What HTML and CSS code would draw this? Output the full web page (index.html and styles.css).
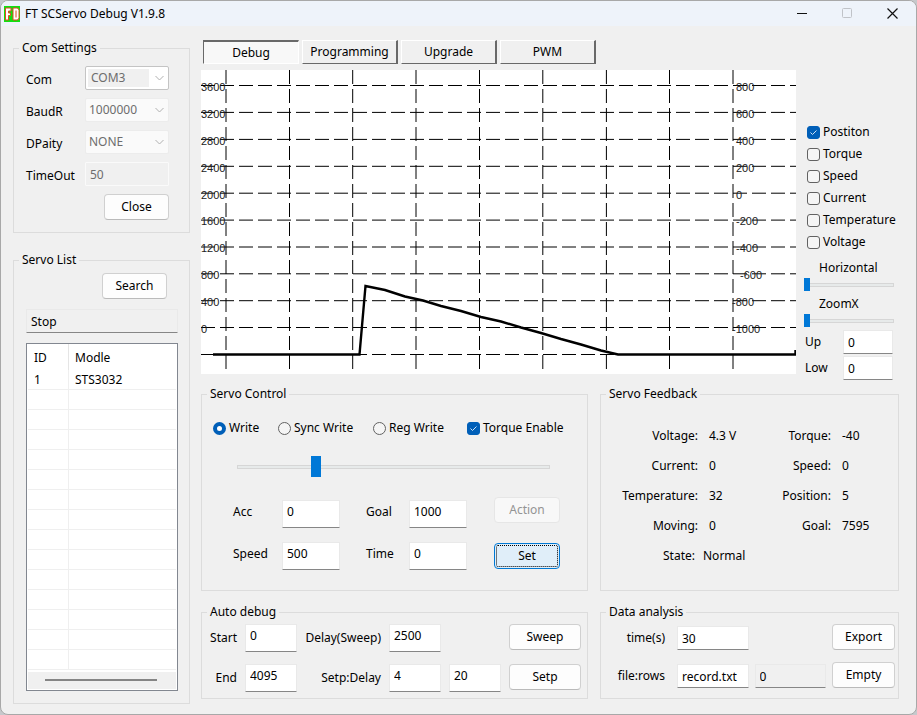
FILE: index.html
```html
<!DOCTYPE html>
<html lang="en">
<head>
  <meta charset="UTF-8">
  <meta name="viewport" content="width=device-width, initial-scale=1.0">
  <title>FT SCServo Debug V1.9.8</title>
  <link rel="stylesheet" href="styles.css">
</head>
<body>

<div class="window">
  <!-- Title bar -->
  <header class="titlebar">
    <svg class="logo" width="16" height="16" viewBox="0 0 16 16" aria-hidden="true">
      <rect width="16" height="16" fill="#10e010"/>
      <path d="M1.500 2h5.500v3H4.500v2H6.500v2.500H4.500V14H1.500z" fill="#fff" stroke="#e04a20"/>
      <path d="M9 2h4q2 0 2 2.500v7q0 2.500-2 2.500H9z" fill="#fff" stroke="#e04a20"/>
      <path d="M12 4.500v7" stroke="#e04a20"/>
    </svg>
    <h1>FT SCServo Debug V1.9.8</h1>
    <button class="win-btn" type="button" aria-label="Minimize">
      <svg width="11" height="11" viewBox="0 0 11 11"><path d="M0 5.500h10" stroke="#111"/></svg>
    </button>
    <button class="win-btn" type="button" aria-label="Maximize" disabled>
      <svg width="11" height="11" viewBox="0 0 11 11"><rect x=".5" y=".5" width="9" height="9" rx="1" fill="none" stroke="#c0c3c8"/></svg>
    </button>
    <button class="win-btn" type="button" aria-label="Close window">
      <svg width="11" height="11" viewBox="0 0 11 11"><path d="M.5.5l10 10M10.500.5l-10 10" stroke="#111" stroke-width="1.200"/></svg>
    </button>
  </header>

  <div class="content">
    <!-- Left column -->
    <aside class="left">
      <fieldset class="com">
        <legend>Com Settings</legend>
        <div class="com-row">
          <label for="com">Com</label>
          <select id="com" class="open" disabled><option>COM3</option></select>
        </div>
        <div class="com-row">
          <label for="baud">BaudR</label>
          <select id="baud" disabled><option>1000000</option></select>
        </div>
        <div class="com-row">
          <label for="parity">DPaity</label>
          <select id="parity" disabled><option>NONE</option></select>
        </div>
        <div class="com-row">
          <label for="timeout">TimeOut</label>
          <input type="text" id="timeout" value="50" disabled>
        </div>
        <button class="btn" type="button">Close</button>
      </fieldset>

      <fieldset class="servos">
        <legend>Servo List</legend>
        <button class="btn" type="button">Search</button>
        <input type="text" class="status" value="Stop" aria-label="Search status" readonly>
        <div class="list">
          <table>
            <thead>
              <tr><th class="id">ID</th><th>Modle</th></tr>
            </thead>
            <tbody>
              <tr><td>1</td><td>STS3032</td></tr>
              <tr><td></td><td></td></tr>
              <tr><td></td><td></td></tr>
              <tr><td></td><td></td></tr>
              <tr><td></td><td></td></tr>
              <tr><td></td><td></td></tr>
              <tr><td></td><td></td></tr>
              <tr><td></td><td></td></tr>
              <tr><td></td><td></td></tr>
              <tr><td></td><td></td></tr>
              <tr><td></td><td></td></tr>
              <tr><td></td><td></td></tr>
              <tr><td></td><td></td></tr>
              <tr><td></td><td></td></tr>
              <tr><td></td><td></td></tr>
            </tbody>
          </table>
          <div class="scrollbar"><div class="thumb"></div></div>
        </div>
      </fieldset>
    </aside>

    <!-- Right column -->
    <main class="right">
      <nav class="tabs">
        <button class="tab active" type="button">Debug</button>
        <button class="tab" type="button">Programming</button>
        <button class="tab" type="button">Upgrade</button>
        <button class="tab" type="button">PWM</button>
      </nav>

      <div class="scope">
        <svg class="chart" viewBox="0 0 595 304" role="img" aria-label="Servo position chart">
          <rect width="595" height="304" fill="#fff"/>
          <g class="grid-lines">
            <path d="M25 0V300M88.500 0V300M151.700 0V300M215 0V300M278.500 0V300M341.800 0V300M405.400 0V300M468.500 0V300M532 0V300"/>
            <path d="M0 15.500H595M0 42.400H595M0 69.400H595M0 96.300H595M0 123.200H595M0 150.100H595M0 177H595M0 203.800H595M0 230.700H595M0 257.500H595M0 284.500H595"/>
          </g>
          <g class="scale">
            <text x="0" y="21">3600</text>
            <text x="0" y="48">3200</text>
            <text x="0" y="75">2800</text>
            <text x="0" y="102">2400</text>
            <text x="0" y="129">2000</text>
            <text x="0" y="155">1600</text>
            <text x="0" y="182">1200</text>
            <text x="0" y="209">800</text>
            <text x="0" y="236">400</text>
            <text x="0" y="263">0</text>
            <text x="535" y="21">800</text>
            <text x="535" y="48">600</text>
            <text x="535" y="75">400</text>
            <text x="535" y="102">200</text>
            <text x="535" y="129">0</text>
            <text x="535" y="155">-200</text>
            <text x="535" y="182">-400</text>
            <text x="539" y="209">-600</text>
            <text x="531" y="236">-800</text>
            <text x="531" y="263">-1000</text>
          </g>
          <path class="trace" d="M12 284.500H158.500L164.500 216L184 220L204 226.500L222 230.500L240 236L260 241L280 247L300 251.500L320 257.500L340 263L360 269L380 274.500L400 280.500L417 284.500H594.500V280"/>
        </svg>

        <div class="side">
          <label class="check"><input type="checkbox" checked>Postiton</label>
          <label class="check"><input type="checkbox">Torque</label>
          <label class="check"><input type="checkbox">Speed</label>
          <label class="check"><input type="checkbox">Current</label>
          <label class="check"><input type="checkbox">Temperature</label>
          <label class="check"><input type="checkbox">Voltage</label>
          <div class="zoom">
            <label for="horizontal">Horizontal</label>
            <input type="range" id="horizontal" value="0">
            <label for="zoomx">ZoomX</label>
            <input type="range" id="zoomx" value="0">
          </div>
          <div class="limits">
            <label for="up">Up</label>
            <input type="text" id="up" value="0">
            <label for="low">Low</label>
            <input type="text" id="low" value="0">
          </div>
        </div>
      </div>

      <div class="panels">
        <fieldset class="control">
          <legend>Servo Control</legend>
          <div class="modes">
            <label class="check"><input type="radio" name="mode" checked>Write</label>
            <label class="check"><input type="radio" name="mode">Sync Write</label>
            <label class="check"><input type="radio" name="mode">Reg Write</label>
            <label class="check"><input type="checkbox" checked>Torque Enable</label>
          </div>
          <input type="range" class="big" min="0" max="4095" value="988" aria-label="Goal position">
          <div class="params">
            <div class="fields">
              <label for="acc">Acc</label>
              <input type="text" class="tall" id="acc" value="0">
              <label for="goal">Goal</label>
              <input type="text" class="tall" id="goal" value="1000">
              <label for="speed">Speed</label>
              <input type="text" class="tall" id="speed" value="500">
              <label for="time">Time</label>
              <input type="text" class="tall" id="time" value="0">
            </div>
            <div class="actions">
              <button class="btn" type="button" disabled>Action</button>
              <button class="btn primary" type="button">Set</button>
            </div>
          </div>
        </fieldset>

        <fieldset class="feedback">
          <legend>Servo Feedback</legend>
          <dl>
            <dt>Voltage:</dt><dd>4.3 V</dd><dt>Torque:</dt><dd>-40</dd>
            <dt>Current:</dt><dd>0</dd><dt>Speed:</dt><dd>0</dd>
            <dt>Temperature:</dt><dd>32</dd><dt>Position:</dt><dd>5</dd>
            <dt>Moving:</dt><dd>0</dd><dt>Goal:</dt><dd>7595</dd>
          </dl>
          <dl class="state">
            <dt>State:</dt><dd>Normal</dd>
          </dl>
        </fieldset>

        <fieldset class="auto">
          <legend>Auto debug</legend>
          <div class="auto-grid">
            <label for="start">Start</label>
            <input type="text" class="tall" id="start" value="0">
            <label for="sweep-delay">Delay(Sweep)</label>
            <input type="text" class="tall" id="sweep-delay" value="2500">
            <button class="btn" type="button">Sweep</button>
            <label for="end">End</label>
            <input type="text" class="tall" id="end" value="4095">
            <label for="step">Setp:Delay</label>
            <input type="text" class="tall" id="step" value="4">
            <input type="text" class="tall" value="20" aria-label="Step delay">
            <button class="btn" type="button">Setp</button>
          </div>
        </fieldset>

        <fieldset class="data">
          <legend>Data analysis</legend>
          <div class="data-grid">
            <label for="seconds">time(s)</label>
            <input type="text" id="seconds" value="30">
            <button class="btn" type="button">Export</button>
            <label for="file">file:rows</label>
            <input type="text" id="file" value="record.txt">
            <input type="text" value="0" aria-label="Rows" readonly>
            <button class="btn" type="button">Empty</button>
          </div>
        </fieldset>
      </div>
    </main>
  </div>
</div>

</body>
</html>
```
FILE: styles.css
```css
* { box-sizing: border-box; }
body {
  margin: 0;
  background: #c6c9cc;
  color: #000;
  font-family: "Noto Sans", "Open Sans", sans-serif;
  font-size: 12px;
  line-height: 16px;
}
input, select, button {
  font: inherit;
  color: inherit;
  margin: 0;
}
.window {
  min-height: 100vh;
  background: #f0f0f0;
  border: 1px solid #a8a8a8;
  border-radius: 8px;
  overflow: hidden;
}

/* Title bar */
.titlebar {
  display: flex;
  align-items: center;
  height: 25px;
  padding: 0 1px 0 3px;
  background: #eef3fa;
}
.titlebar h1 {
  flex: 1;
  margin: 0 0 0 5px;
  font-size: 12px;
  font-weight: 400;
}
.win-btn {
  display: flex;
  align-items: center;
  justify-content: center;
  width: 45px;
  height: 24px;
  padding: 0;
  border: 0;
  background: none;
}

.content {
  display: grid;
  grid-template-columns: 177px 1fr;
  gap: 11px;
  padding: 14px 17px 10px 12px;
}

/* --inset is the left padding of the group, the legend ignores it */
fieldset {
  --inset: 0px;
  min-width: 0;
  margin: 0;
  padding: 0;
  border: 1px solid #dcdcdc;
}
legend {
  margin-left: calc(5px - var(--inset));
  padding: 0 3px;
}

/* Controls */
input[type="text"] {
  width: 100%;
  min-width: 0;
  height: 24px;
  padding: 0 4px;
  border: 1px solid #e9e9e9;
  border-bottom-color: #868686;
  border-radius: 1px;
  background: #fff;
  outline: none;
}
input[type="text"].tall {
  height: 28px;
  padding-bottom: 5px;
}
input[type="text"]:disabled {
  border-color: #fafafa;
  background: #f0f0f0;
  color: #6d6d6d;
}
input[type="text"]:read-only:not(:disabled) {
  background: #f0f0f0;
}
select {
  width: 100%;
  height: 24px;
  padding: 0 3px;
  appearance: none;
  border: 1px solid #ececec;
  border-radius: 2px;
  background: #fafafa url("data:image/svg+xml,%3Csvg xmlns='http://www.w3.org/2000/svg' width='9' height='6'%3E%3Cpath d='M.5 1l4 4 4-4' fill='none' stroke='%23b0b0b0'/%3E%3C/svg%3E") no-repeat right 4px center;
}
select:disabled {
  color: #6d6d6d;
  opacity: 1;
}
select.open {
  padding: 0 5px;
  border-color: #c4c4c4;
  background-color: #fff;
  background-image: url("data:image/svg+xml,%3Csvg xmlns='http://www.w3.org/2000/svg' width='9' height='6'%3E%3Cpath d='M.5 1l4 4 4-4' fill='none' stroke='%23b0b0b0'/%3E%3C/svg%3E"), linear-gradient(#f0f0f0, #f0f0f0);
  background-size: auto, 61px 18px;
  background-position: right 4px center, 2px 2px;
}
.btn {
  height: 26px;
  padding: 0;
  border: 1px solid #d0d0d0;
  border-bottom-color: #bababa;
  border-radius: 4px;
  background: #fdfdfd;
}
.btn:disabled {
  border-color: #e6e6e6;
  background: #f8f8f8;
  color: #949494;
}
.btn.primary {
  border-color: #0078d4;
  background: #e0eef9;
  outline: 1px dotted #000;
  outline-offset: -3px;
}
.check {
  display: flex;
  align-items: center;
  gap: 3px;
  height: 22px;
  white-space: nowrap;
}
input[type="checkbox"],
input[type="radio"] {
  flex: none;
  width: 13px;
  height: 13px;
  appearance: none;
  border: 1px solid #626262;
  border-radius: 3px;
  background: #f5f5f5;
}
input[type="radio"] { border-radius: 50%; }
input[type="checkbox"]:checked {
  border-color: #005fb8;
  background: #005fb8 url("data:image/svg+xml,%3Csvg xmlns='http://www.w3.org/2000/svg' width='11' height='11'%3E%3Cpath d='M2.500 5.500l2 2 4-4' fill='none' stroke='%23cfe2f4'/%3E%3C/svg%3E") center no-repeat;
}
input[type="radio"]:checked {
  border: 4px solid #005fb8;
  background: #fff;
}
input[type="range"] {
  display: block;
  width: 100%;
  height: 18px;
  appearance: none;
  background: none;
}
input[type="range"]::-webkit-slider-runnable-track {
  height: 4px;
  border: 1px solid #d6d6d6;
  background: #e7eaea;
}
input[type="range"]::-webkit-slider-thumb {
  appearance: none;
  width: 6px;
  height: 13px;
  margin: -6px -1px 0;
  background: #0078d7;
}
input[type="range"].big::-webkit-slider-thumb {
  width: 10px;
  height: 21px;
  margin: -10px 0 0;
}

/* Left column */
.left {
  display: flex;
  flex-direction: column;
  gap: 19px;
}
.com {
  --inset: 12px;
  display: flex;
  flex-direction: column;
  gap: 8px;
  padding: 10px 20px 12px var(--inset);
}
.com-row {
  display: grid;
  grid-template-columns: 59px 1fr;
  align-items: end;
}
.com-row label { line-height: 20px; }
.com .btn, .servos .btn {
  align-self: flex-end;
  width: 65px;
}
.servos {
  --inset: 12px;
  display: flex;
  flex-direction: column;
  gap: 10px;
  padding: 5px 11px 12px var(--inset);
}
.servos .btn { margin-right: 11px; }
.list {
  border: 1px solid #828790;
  background: #fff;
  padding: 0 1px 1px;
}
.list table {
  width: 100%;
  border-collapse: separate;
  border-spacing: 0;
}
.list th {
  height: 26px;
  padding: 2px 6px 0;
  border-right: 1px solid #e5e5e5;
  font-weight: 400;
  text-align: left;
}
.list th:last-child { border-right: 0; }
.list .id { width: 41px; }
.list td {
  height: 20px;
  padding: 0 6px;
  border-right: 1px solid #efefef;
  border-bottom: 1px solid #efefef;
}
.list td:last-child { border-right: 0; }
.scrollbar {
  margin-top: 2px;
  padding: 7px 19px 8px 17px;
  background: #f0f0f0;
}
.thumb {
  height: 2px;
  background: #858585;
}

/* Tabs and chart */
.tabs {
  display: flex;
  gap: 3px;
  padding-left: 2px;
}
.tab {
  width: 96px;
  height: 24px;
  padding: 0;
  border: 1px solid #fff;
  border-right: 2px solid #696969;
  border-bottom-color: #696969;
  background: #f0f0f0;
}
.tab.active {
  border: 1px solid #fff;
  border-top: 2px solid #696969;
  border-left: 1px solid #696969;
  background: #f8f8f8;
}
.scope {
  display: flex;
  align-items: flex-start;
  gap: 8px;
  padding: 6px 0;
}
.chart {
  flex: 1;
  min-width: 0;
}
.grid-lines path {
  fill: none;
  stroke: #000;
  stroke-dasharray: 14 5;
}
.scale {
  font-family: "Liberation Sans", Arial, sans-serif;
  font-size: 11px;
  fill: #222;
}
.trace {
  fill: none;
  stroke: #000;
  stroke-width: 2.4;
}
.side {
  width: 95px;
  padding-top: 51px;
}
.side .check { padding-left: 3px; }
.zoom {
  padding: 7px 5px 0 0;
}
.zoom label {
  display: block;
  padding-left: 15px;
}
.zoom input + label { margin-top: 2px; }
.limits {
  display: grid;
  grid-template-columns: 36px 50px;
  align-items: center;
  justify-content: start;
  gap: 2px;
  padding-left: 1px;
}

/* Panels */
.panels {
  display: grid;
  grid-template-columns: 387fr 299fr;
  gap: 13px 12px;
}
.control {
  --inset: 11px;
  padding: 15px 11px 20px var(--inset);
}
.modes {
  display: grid;
  grid-template-columns: 65px 95px 94px 1fr;
}
.control .big {
  width: 313px;
  height: 22px;
  margin: 17px 26px 19px 24px;
}
.params {
  display: flex;
  justify-content: space-between;
  padding: 0 16px 0 20px;
}
.fields {
  display: grid;
  grid-template-columns: 49px 84px 43px 58px;
  row-gap: 14px;
  padding-top: 3px;
}
.fields label { line-height: 24px; }
.fields .tall { width: 58px; }
.actions {
  display: flex;
  flex-direction: column;
  gap: 20px;
}
.actions .btn { width: 66px; }

.feedback { padding-top: 19px; }
dl {
  display: grid;
  grid-template-columns: 97px 50px 61px 1fr;
  column-gap: 11px;
  margin: 0;
  line-height: 30px;
  white-space: nowrap;
}
dt { text-align: right; }
dd { margin: 0; }
dl.state {
  grid-template-columns: 94px 1fr;
  column-gap: 8px;
}

.auto {
  --inset: 6px;
  padding: 4px 6px 6px var(--inset);
}
.auto-grid {
  display: grid;
  grid-template-columns: 29px 52px 76px 52px 52px 72px;
  gap: 12px 8px;
  align-items: center;
  white-space: nowrap;
}
.auto-grid label { text-align: right; }
.auto-grid .btn {
  grid-column: 6;
  align-self: start;
}
.data { padding: 4px 3px 8px 0; }
.data-grid {
  display: grid;
  grid-template-columns: 70px 1fr 1fr 63px;
  gap: 12px 6px;
  align-items: end;
}
.data-grid label {
  padding-right: 6px;
  line-height: 24px;
  text-align: right;
}
.data-grid .btn { grid-column: 4; }
```
